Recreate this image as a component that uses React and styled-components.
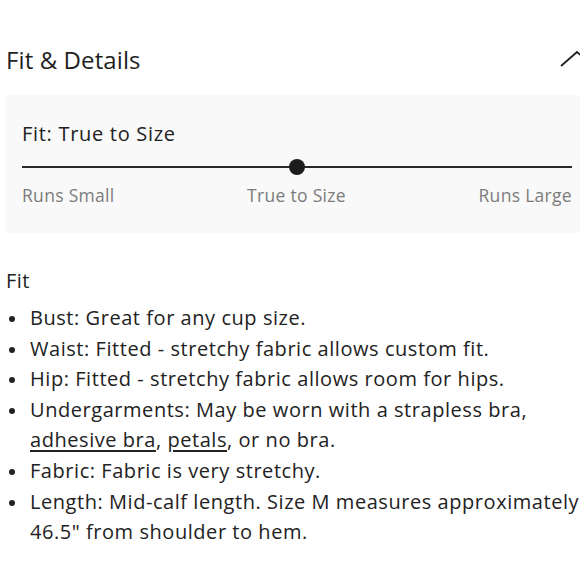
import React from "react";
import styled, { createGlobalStyle } from "styled-components";

const Global = createGlobalStyle`
  html, body { margin: 0; padding: 0; background: #fff; overflow: hidden; }
  body { font-family: "Open Sans", "Liberation Sans", sans-serif; color: #222; }
`;

const Page = styled.div`
  width: 582px;
  padding: 42px 0 0 6px;
`;

const Header = styled.div`
  display: flex;
  align-items: center;
  justify-content: space-between;
  height: 34px;
`;

const Title = styled.h2`
  margin: 0;
  font-size: 24px;
  font-weight: 400;
  color: #1f1f1f;
  letter-spacing: 0.1px;
`;

const Chevron = styled.svg`
  width: 36px;
  height: 18px;
  margin-right: -8px;
`;

const Panel = styled.div`
  margin-top: 19px;
  background: #f9f9f9;
  padding: 24px 16px 26px 16px;
`;

const PanelTitle = styled.div`
  font-size: 20px;
  letter-spacing: 0.7px;
  color: #222;
  line-height: 30px;
`;

const Track = styled.div`
  position: relative;
  margin-top: 17px;
  height: 2px;
  background: #2a2a2a;
`;

const Knob = styled.span`
  position: absolute;
  left: 50%;
  top: 50%;
  width: 16px;
  height: 16px;
  border-radius: 50%;
  background: #1c1c1c;
  transform: translate(-50%, -50%);
`;

const Labels = styled.div`
  display: flex;
  justify-content: space-between;
  margin-top: 15px;
  font-size: 17.5px;
  letter-spacing: 0.3px;
  color: #7c7c7c;
  line-height: 24px;
`;

const Section = styled.div`
  margin-top: 33px;
`;

const SectionTitle = styled.div`
  font-size: 20px;
  letter-spacing: 0.5px;
  line-height: 30px;
  color: #222;
`;

const List = styled.ul`
  margin: 7px 0 0 0;
  padding: 0;
  list-style: none;
`;

const Item = styled.li`
  position: relative;
  padding-left: 24px;
  font-size: 20px;
  letter-spacing: 0.55px;
  line-height: 30.6px;
  color: #222;
  white-space: nowrap;
  &::before {
    content: "";
    position: absolute;
    left: 3px;
    top: 13px;
    width: 6px;
    height: 6px;
    border-radius: 50%;
    background: #222;
  }
`;

const Link = styled.a`
  color: #222;
  text-decoration: underline;
  text-underline-offset: 3px;
`;

export default function App() {
  return (
    <>
      <Global />
      <Page>
        <Header>
          <Title>Fit &amp; Details</Title>
          <Chevron viewBox="0 0 36 18">
            <polyline points="1,16 17,2 33,16" fill="none" stroke="#222" strokeWidth="1.8" />
          </Chevron>
        </Header>
        <Panel>
          <PanelTitle>Fit: True to Size</PanelTitle>
          <Track>
            <Knob />
          </Track>
          <Labels>
            <span>Runs Small</span>
            <span>True to Size</span>
            <span>Runs Large</span>
          </Labels>
        </Panel>
        <Section>
          <SectionTitle>Fit</SectionTitle>
          <List>
            <Item>Bust: Great for any cup size.</Item>
            <Item>Waist: Fitted - stretchy fabric allows custom fit.</Item>
            <Item>Hip: Fitted - stretchy fabric allows room for hips.</Item>
            <Item>
              Undergarments: May be worn with a strapless bra,
              <br />
              <Link>adhesive bra</Link>, <Link>petals</Link>, or no bra.
            </Item>
            <Item>Fabric: Fabric is very stretchy.</Item>
            <Item>
              Length: Mid-calf length. Size M measures approximately
              <br />
              46.5" from shoulder to hem.
            </Item>
          </List>
        </Section>
      </Page>
    </>
  );
}
